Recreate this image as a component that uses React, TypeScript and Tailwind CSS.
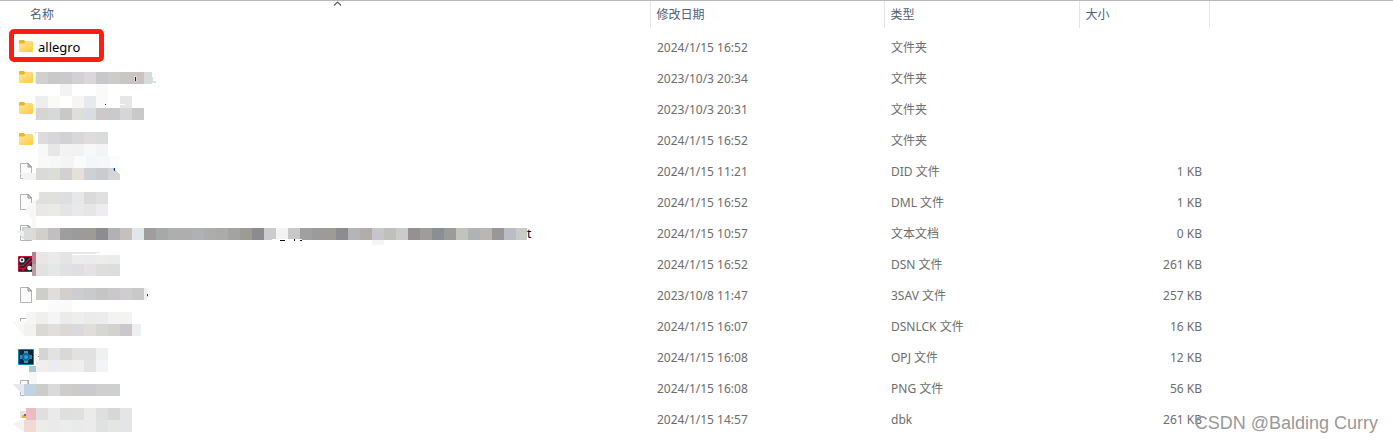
import type { ReactNode } from 'react';

type IconKind = 'folder' | 'file' | 'text' | 'board' | 'chip' | 'image';

// A run of 12px blocks starting at x, y is relative to the top of the row
interface Strip {
    x: number;
    y: number;
    colors: string;
    h?: number;
    end?: number;
}

interface FileRow {
    id: number;
    icon: IconKind;
    name?: string;
    date: string;
    type: string;
    size?: string;
    strips?: Strip[];
    extra?: ReactNode;
}

const files: FileRow[] = [
    { id: 1, icon: 'folder', name: 'allegro', date: '2024/1/15 16:52', type: '文件夹' },
    {
        id: 2, icon: 'folder', date: '2023/10/3 20:34', type: '文件夹',
        strips: [
            { x: 36, y: 9, end: 152, colors: 'd0d0cc c8c9cb cccac9 d1d0d4 dbd7d8 c8c8ca cdcbcc c7c8c4 c8c3c8 d9dadc' },
            { x: 60, y: 21, colors: 'f3f3f3' },
            { x: 96, y: 21, colors: 'fafaf9' },
        ],
        extra: (
            <>
                <path d="M35 9h1v12h-1z" fill="#fbeed6" />
                <path d="M134 13h3v5h-3z" fill="#e3dccb" />
                <path d="M135 14h1v4h-1z" fill="#1b1a45" />
                <path d="M152 14h1v4h-1z" fill="#bfe6f5" />
                <path d="M152 18h4v2h-4z" fill="#d9dfe2" />
            </>
        ),
    },
    {
        id: 3, icon: 'folder', date: '2023/10/3 20:31', type: '文件夹',
        strips: [
            { x: 36, y: 2, colors: 'eeeeef fafaf9 ffffff f7f5f4 e7e9ec fafafa ffffff e6e6e6' },
            { x: 36, y: 14, colors: 'd8d4d1 d6d8da c8c8c6 dfdedd dbdce2 cdc8ca c9cacc d8d5d8 c8c9c8' },
        ],
        extra: (
            <>
                <path d="M35 2h1v24h-1z" fill="#fbf1de" />
                <path d="M105 10h1v1h-1z" fill="#0b1a5c" />
                <path d="M120 10h5v1h-5z" fill="#fff" />
            </>
        ),
    },
    {
        id: 4, icon: 'folder', date: '2024/1/15 16:52', type: '文件夹',
        strips: [
            { x: 36, y: 7, colors: 'dddcdb d6d7da d4d1d5 d7d9d9 dedcdd dadbdd' },
            { x: 36, y: 19, colors: 'f8f8f8 e7e7e7 f3f3f3 f2f2f3 f8f8f9 f4f4f4' },
        ],
        extra: (
            <>
                <path d="M35 7h3v24h-3z" fill="#fff" />
                <path d="M35 7h2v1h-2z" fill="#f4dd9a" />
            </>
        ),
    },
    {
        id: 5, icon: 'file', date: '2024/1/15 11:21', type: 'DID 文件', size: '1 KB',
        strips: [
            { x: 38, y: 0, end: 119, colors: 'f9f9f9 f7f7f8 f4f4f4 fafbfb f4f7f9 f6f7f8 fbfdfd' },
            { x: 36, y: 12, end: 108, colors: 'dadad8 dbddd8 d1d1d3 e5e0da cdd1d6 cacbcf' },
        ],
        extra: (
            <>
                <path d="M20 17h16v7H24z" fill="#f3f3f2" />
                <path d="M108 12h6l6 7v5h-12z" fill="#d4d6d5" />
                <path d="M113 12h1v2h-1z" fill="#c9a27a" />
                <path d="M114 12h1v3h-1z" fill="#063a9a" />
            </>
        ),
    },
    {
        id: 6, icon: 'file', date: '2024/1/15 16:52', type: 'DML 文件', size: '1 KB',
        strips: [
            { x: 36, y: 5, colors: 'e0e0df e0e0df dedee0 e7e8ea dadadb e0e0e1' },
            { x: 36, y: 17, colors: 'e9e8e6 eaeae9 e4e4e7 e9e9ea e6e6e7 eeecf0' },
        ],
        extra: (
            <>
                <path d="M36 5h3v6l-3 3z" fill="#fff" />
                <path d="M36 12v29h-4V32l-6-7v-4z" fill="#f7f7f7" />
            </>
        ),
    },
    {
        id: 7, icon: 'text', date: '2024/1/15 10:57', type: '文本文档', size: '0 KB',
        strips: [
            {
                x: 36, y: 10, end: 527,
                colors: 'd0cfcb c2bfc0 9f9e9d 9a9b9d 9c9b96 8d8c90 b1b2b6 c4c0bb e1e6ea 9f9e9d a5a9a8 aeaeae aeaeae b0b1b4 adadad ababaa a3a3a2 9c9b96 8c8c90 cccbd0 f3f3f2 c8c8c8 a1a09e 9a9b9d 9c9b96 8d8c90 b4b5b8 b2adab c6c6ca bfbfbb cacccb 959091 9d9e9c 8b8e93 9b9b9b c3c3be afb3b6 bab6b4 9a9797 babdc4 cacac8',
            },
            { x: 372, y: 22, h: 5, colors: 'f5f5f5' },
        ],
        extra: (
            <>
                <path d="M17 13h7v-3h12v12H24z" fill="#dadcdb" />
                <path d="M17 13h7v6l-3-1z" fill="#f0f0f0" />
                <path d="M272 21h30v1h-30z" fill="#fff" />
                <path d="M280 22h5v1h-5zM294 21h1v2h-1zM300 22h2v1h-2z" fill="#111" />
            </>
        ),
    },
    {
        id: 8, icon: 'board', date: '2024/1/15 16:52', type: 'DSN 文件', size: '261 KB',
        strips: [
            { x: 36, y: 3, colors: 'e8e7e6 eaeaea e4e4e4' },
            { x: 72, y: 6, h: 9, colors: 'ececec ebebeb ededed ebebeb' },
            { x: 36, y: 15, colors: 'e2e2e0 e6e7e7 e3e1e0 dddfe2 e5e2e5 dededd dcdddd' },
        ],
        extra: (
            <>
                <path d="M32 3h4v12h-4z" fill="#b98190" />
                <path d="M32 15h4v12h-4z" fill="#b99ca6" />
                <path d="M72 3h28v1H72zM72 5h24v-1H72z" fill="#e6e6e6" />
            </>
        ),
    },
    {
        id: 9, icon: 'file', date: '2023/10/8 11:47', type: '3SAV 文件', size: '257 KB',
        strips: [
            { x: 36, y: 8, end: 144, colors: 'cfcdc9 dedede d3cfcc cccdd0 c9cacc c4c5c4 c8c9c8 d0cdd0 c9c9c9' },
            { x: 144, y: 8, end: 147, colors: 'eff0f1' },
            { x: 48, y: 20, colors: 'fbfbfb fafafa' },
        ],
        extra: (
            <>
                <path d="M147 14h1v2h-1z" fill="#073f77" />
                <path d="M147 16h1v1h-1z" fill="#9fd0ee" />
            </>
        ),
    },
    {
        id: 10, icon: 'file', date: '2024/1/15 16:07', type: 'DSNLCK 文件', size: '16 KB',
        strips: [
            { x: 24, y: 1, colors: 'f5f5f5 efefed f5f5f5 ebebea eeeeee ebebeb ececec f3f3f1 f3f3f4' },
            { x: 24, y: 13, end: 141, colors: 'f2f2f0 dad9d4 dfdfdf dcd8d5 d8dadd dfdedb d6d6d6 d2d2cf cbc7cc eeeff1' },
        ],
        extra: (
            <>
                <path d="M18 1h8v24h-8z" fill="#fff" />
                <path d="M20 7h6v1h-5v2h-1z" fill="#ababab" />
                <path d="M12 10h14v3h-2v12z" fill="#f8f8f8" />
                <path d="M24 13h2v12h-2z" fill="#f2f2f0" />
            </>
        ),
    },
    {
        id: 11, icon: 'chip', date: '2024/1/15 16:08', type: 'OPJ 文件', size: '12 KB',
        strips: [
            { x: 36, y: 6, colors: 'd4d4d4 e3e2e2 d9d8d9 e1e1e1 e1e1e2 f0f0f0' },
            { x: 36, y: 18, colors: 'f2eeee eaecef efecec efeff0 e4e4e5 f3f4f7' },
        ],
        extra: (
            <>
                <path d="M36 6h3v12h-3z" fill="#fff" />
                <path d="M38 14h1v1h-1z" fill="#a8761a" />
                <path d="M29 24h7v6h-7z" fill="#aec9d1" />
                <path d="M29 30h7v12h-7z" fill="#f4f4f3" />
            </>
        ),
    },
    {
        id: 12, icon: 'file', date: '2024/1/15 16:08', type: 'PNG 文件', size: '56 KB',
        strips: [
            { x: 24, y: 11, colors: 'c1d3e2 cdccc8 dadada cecccc cdcaca cbcbcd d0cfd0 cecfcf' },
        ],
        extra: (
            <>
                <path d="M29 0h8v11h-8z" fill="#f7f7f6" />
                <path d="M12 11h12v12z" fill="#e5e8ec" />
            </>
        ),
    },
    {
        id: 13, icon: 'image', date: '2024/1/15 14:57', type: 'dbk', size: '261 KB',
        strips: [
            { x: 26, y: 4, end: 36, colors: 'ecbcc4' },
            { x: 36, y: 4, colors: 'dfdfdd eaeaeb dfdfde e0e0e0 ebebe9 dedfe0 d8d7d5 e3e5e7' },
            { x: 24, y: 16, colors: 'f0dad3 ececea eaeaea ebecec eaeaea ebebeb dfe2e1 e5e5e3 e3e5e7' },
        ],
        extra: (
            <>
                <path d="M13 20l8-4h3v12z" fill="#f6f2f0" />
                <path d="M22 11h4v3h-4z" fill="#efb53a" />
                <path d="M24 10h2v2h-2z" fill="#a34a9c" />
            </>
        ),
    },
];

const FileIcon = ({ kind }: { kind: IconKind }) => {
    if (kind === 'folder') {
        return (
            <svg width="16" height="16" viewBox="0 0 16 16" className="mb-0.5 shrink-0">
                <defs>
                    <linearGradient id="folder" x1="0" y1="0" x2="1" y2="1">
                        <stop offset="0" stopColor="#ffe69b" />
                        <stop offset="1" stopColor="#ffca3e" />
                    </linearGradient>
                </defs>
                <path d="M1 2.2Q1 1 2 1h3.8l1.400 1.500h7V6H1z" fill="#f0b41e" />
                <path d="M1 4.500h5L7.500 2.500H14q1 0 1 1v8.500q0 1-1 1H2q-1 0-1-1z" fill="url(#folder)" />
            </svg>
        );
    }
    if (kind === 'board') {
        return (
            <svg width="16" height="16" viewBox="0 0 16 16" className="mb-0.5 shrink-0">
                <rect width="16" height="16" rx="1" fill="#c4122f" />
                <rect x="1" y="1" width="14" height="14" fill="#102433" />
                <path d="M1 9.500h4L12.500 2H15M1 12.500h5l8-8M4 15l3.500-3.500" stroke="#d3132f" strokeWidth="1.400" fill="none" />
                <circle cx="4" cy="4" r="1.900" fill="#3b4b58" stroke="#e9edf0" strokeWidth="1.400" />
                <circle cx="11.500" cy="12" r="2.300" fill="#fff" />
            </svg>
        );
    }
    if (kind === 'chip') {
        return (
            <svg width="16" height="16" viewBox="0 0 16 16" className="mb-0.5 shrink-0">
                <rect width="16" height="16" rx="1" fill="#0b86b8" />
                <rect x="1" y="1" width="14" height="14" fill="#03293b" />
                <path d="M7 2v12M9 2v12M2 7h12M2 9h12" stroke="#b9c6cc" strokeWidth="1.200" />
                <circle cx="8" cy="8" r="4.200" fill="#087bb0" />
                <circle cx="8" cy="8" r="2.800" fill="none" stroke="#05618c" />
                <circle cx="8" cy="8" r="2" fill="#1ba7e0" />
            </svg>
        );
    }
    if (kind === 'image') {
        return (
            <svg width="16" height="16" viewBox="0 0 16 16" className="mb-0.5 shrink-0">
                <path d="M2 0h8v7H2z" fill="#e6e4e2" />
            </svg>
        );
    }
    return (
        <svg width="16" height="16" viewBox="0 0 16 16" className="mb-0.5 shrink-0">
            <path d="M2.500.500h8l3 3v12h-11z" fill="#fbfbfb" stroke="#b4b4b4" />
            <path d="M10 .500V4h3.500z" fill="#e0e0e0" stroke="#8f8f8f" />
            {kind === 'text' && <path d="M4 3h5M4 5h8M4 7h8" stroke="#a5a5a5" />}
        </svg>
    );
};

const Mosaic = ({ strips, children }: { strips: Strip[]; children?: ReactNode }) => (
    <svg className="absolute left-0 top-0 overflow-visible" width="540" height="31" shapeRendering="crispEdges" aria-hidden="true">
        {strips.map((s) =>
            s.colors.split(' ').map((color, i) => {
                const x = s.x + i * 12;
                const width = Math.min(12, (s.end ?? Infinity) - x);
                return <rect key={`${s.y}-${x}`} x={x} y={s.y} width={width} height={s.h ?? 12} fill={`#${color}`} />;
            })
        )}
        {children}
    </svg>
);

const App = () => {
    return (
        <div className="relative w-full overflow-hidden border-t border-[#b9b9b9] bg-white pb-[7px] font-['Noto_Sans','Noto_Sans_CJK_SC',sans-serif] text-xs text-[#6d6d6d]">
            <table className="w-full table-fixed border-collapse">
                <colgroup>
                    <col className="w-[650px]" />
                    <col className="w-[234px]" />
                    <col className="w-[195px]" />
                    <col className="w-[130px]" />
                    <col />
                </colgroup>
                <thead>
                    <tr className="h-[27px] text-left text-[#4c607a]">
                        <th className="relative border-r border-[#e5e5e5] pl-[30px] font-normal">
                            名称
                            <svg className="absolute left-[333px] top-0" width="9" height="6" viewBox="0 0 9 6">
                                <path d="M1 4.500L4.500 1 8 4.500" fill="none" stroke="#5c5c5c" strokeWidth="1.200" />
                            </svg>
                        </th>
                        <th className="border-r border-[#e5e5e5] pl-1.5 font-normal">修改日期</th>
                        <th className="border-r border-[#e5e5e5] pl-1.5 font-normal">类型</th>
                        <th className="border-r border-[#e5e5e5] pl-1.5 font-normal">大小</th>
                        <td />
                    </tr>
                </thead>
                <tbody>
                    <tr className="h-1">
                        <td colSpan={5} />
                    </tr>
                    {files.map((file) => (
                        <tr key={file.id} className="h-[31px]">
                            <td className="p-0">
                                <div className="relative flex h-[31px] items-center pl-[18px]">
                                    <FileIcon kind={file.icon} />
                                    {file.name && <span className="ml-1 text-[13px] text-black">{file.name}</span>}
                                    {/* highlight box around the folder we care about */}
                                    {file.name && (
                                        <div className="absolute -top-[3px] left-[9px] h-[33px] w-[95px] rounded-[5px] border-[5px] border-[#ff1d12]" />
                                    )}
                                    {file.strips && <Mosaic strips={file.strips}>{file.extra}</Mosaic>}
                                    {file.icon === 'text' && <span className="absolute left-[527px] text-black">t</span>}
                                </div>
                            </td>
                            <td className="py-0 pl-[7px]">{file.date}</td>
                            <td className="py-0 pl-[7px]">{file.type}</td>
                            <td className="py-0 pr-[7px] text-right">{file.size}</td>
                            <td />
                        </tr>
                    ))}
                </tbody>
            </table>
            <div className="absolute bottom-[5px] right-[15px] font-['Liberation_Sans',Arial,sans-serif] text-lg text-[#999999]">
                CSDN @Balding Curry
            </div>
        </div>
    );
};

export default App;
